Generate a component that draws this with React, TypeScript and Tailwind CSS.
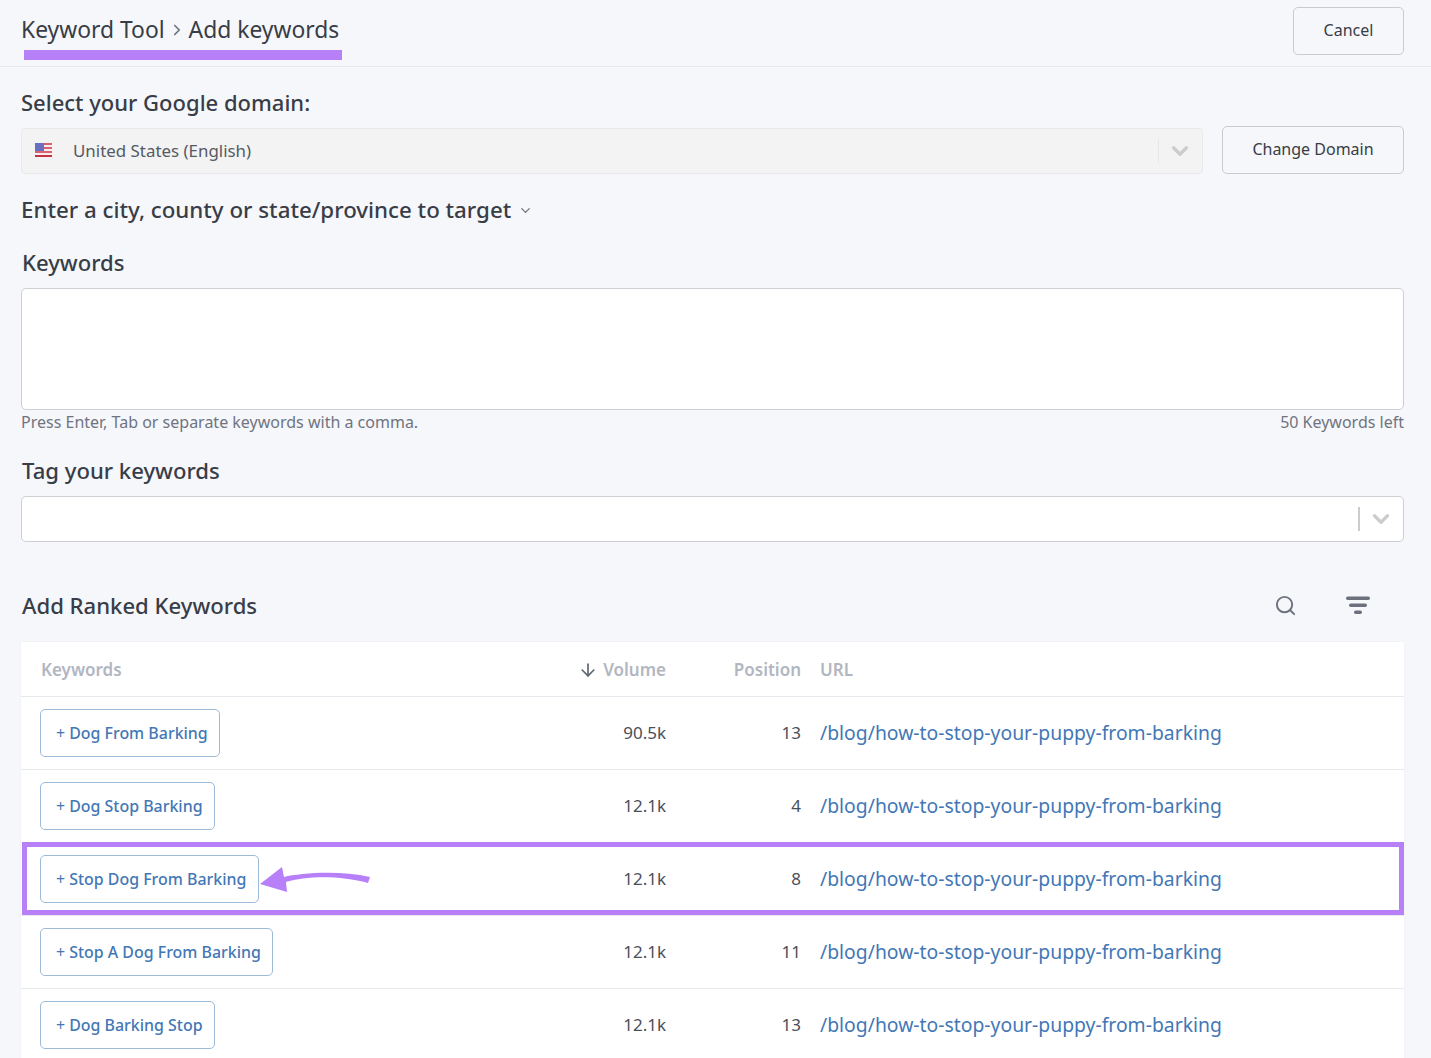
import { ArrowDown, ChevronDown, ChevronRight, Search } from 'lucide-react';

const rows = [
  { keyword: 'Dog From Barking', volume: '90.5k', position: 13 },
  { keyword: 'Dog Stop Barking', volume: '12.1k', position: 4 },
  { keyword: 'Stop Dog From Barking', volume: '12.1k', position: 8, highlight: true },
  { keyword: 'Stop A Dog From Barking', volume: '12.1k', position: 11 },
  { keyword: 'Dog Barking Stop', volume: '12.1k', position: 13 },
];

const UsFlag = () => (
  <svg width="17" height="14" viewBox="0 0 17 14" className="shrink-0">
    <rect x="0" y="0" width="17" height="14" fill="#f4eef2" />
    <rect x="0" y="0" width="17" height="2" fill="#d9646e" />
    <rect x="0" y="4" width="17" height="2" fill="#d9646e" />
    <rect x="0" y="8" width="17" height="2" fill="#d9646e" />
    <rect x="0" y="12" width="17" height="2" fill="#c8323f" />
    <rect x="0" y="0" width="9" height="8" fill="#6a6fc4" />
  </svg>
);

const SelectArrow = ({ muted }: { muted?: boolean }) => (
  <div className="flex items-center">
    <div className={muted ? 'h-[24px] w-px bg-[#e6e6e6]' : 'h-[24px] w-[2px] bg-[#cccccc]'} />
    <ChevronDown className="ml-[8px] mr-[9px] h-[26px] w-[26px] text-[#cccccc]" strokeWidth={3} />
  </div>
);

const App = () => {
  return (
    <div className="h-[1058px] overflow-hidden bg-[#f6f7fb] font-['Noto_Sans',sans-serif] text-[#383d47]">
      <div className="relative flex h-[67px] items-start justify-between border-b border-[#e8e9ee] pl-[21px] pr-[27px]">
        <div className="flex h-[60px] items-center text-[22.85px] leading-none">
          <span>Keyword Tool</span>
          <ChevronRight className="mx-[3px] h-[18px] w-[18px] text-[#6c717d]" strokeWidth={2.25} />
          <span>Add keywords</span>
        </div>
        <div className="absolute left-[24px] top-[50px] h-[10px] w-[318px] bg-[#b780f9]" />
        <button className="mt-[7px] h-[48px] w-[111px] rounded-[5px] border border-[#c9cbd1] pb-[2px] text-[16px]">Cancel</button>
      </div>

      <div className="pl-[21px] pr-[27px]">
        <h3 className="mt-[20px] text-[22px] font-medium leading-[30px]">Select your Google domain:</h3>
        <div className="mt-[10px] flex items-center gap-[19px]">
          <div className="flex h-[46px] flex-1 items-center justify-between rounded-[4px] border border-[#e9e9ea] bg-[#f3f3f3] pl-[13px]">
            <div className="flex items-center gap-[21px] text-[16.9px] text-[#555a64]">
              <UsFlag />
              <span>United States (English)</span>
            </div>
            <SelectArrow muted />
          </div>
          <button className="-mt-[1px] h-[48px] w-[182px] rounded-[5px] border border-[#c9cbd1] pb-[2px] text-[16px]">Change Domain</button>
        </div>

        <div className="mt-[21px] flex items-center text-[22.3px] font-medium leading-[30px]">
          <span>Enter a city, county or state/province to target</span>
          <ChevronDown className="ml-[7px] h-[15px] w-[15px] text-[#6c717d]" strokeWidth={2} />
        </div>

        <h3 className="mt-[22px] pl-[1px] text-[22.1px] font-medium leading-[30px]">Keywords</h3>
        <div className="mt-[11px] h-[122px] rounded-[5px] border border-[#cdcfd4] bg-white" />
        <div className="mt-[1px] flex justify-between text-[16px] leading-[22px] text-[#6f7480]">
          <span>Press Enter, Tab or separate keywords with a comma.</span>
          <span>50 Keywords left</span>
        </div>

        <h3 className="mt-[22px] pl-[1px] text-[22.1px] font-medium leading-[30px]">Tag your keywords</h3>
        <div className="mt-[11px] flex h-[46px] items-center justify-end rounded-[5px] border border-[#cdcfd4] bg-white">
          <SelectArrow />
        </div>

        <div className="mt-[45px] flex h-[36px] items-center justify-between">
          <h3 className="pl-[1px] text-[22.1px] font-medium leading-[30px]">Add Ranked Keywords</h3>
          <div className="flex items-center">
            <Search className="h-[23px] w-[23px] text-[#6c717d]" strokeWidth={2} />
            <svg width="26" height="20" viewBox="0 0 26 20" className="ml-[48px] mr-[33px] text-[#6c717d]">
              <rect x="1" y="1.5" width="24" height="3.5" rx="1.75" fill="currentColor" />
              <rect x="4" y="8.5" width="18" height="3.5" rx="1.75" fill="currentColor" />
              <rect x="9" y="15.5" width="8" height="3.5" rx="1.75" fill="currentColor" />
            </svg>
          </div>
        </div>

        <div className="mt-[19px] bg-white shadow-[0_0_2px_rgba(0,0,0,0.05)]">
          <div className="flex h-[55px] items-center border-b border-[#e8e9ee] pl-[20px] pt-[2px] text-[17px] font-semibold text-[#b2b6c1]">
            <div className="w-[520px]">Keywords</div>
            <div className="flex w-[105px] items-center justify-end">
              <ArrowDown className="mr-[5px] h-[20px] w-[20px] text-[#5f6470]" strokeWidth={2} />
              <span>Volume</span>
            </div>
            <div className="w-[135px] text-right">Position</div>
            <div className="ml-[19px]">URL</div>
          </div>
          {rows.map((row) => (
            <div key={row.keyword} className="relative flex h-[73px] items-center border-b border-[#e8e9ee] pl-[19px] text-[17px]">
              <div className="w-[521px]">
                <button className="inline-flex h-[48px] items-center rounded-[5px] border border-[#9dbad6] pl-[15px] pr-[11.5px] pt-[2px] text-[15.95px] font-medium text-[#4377b5]">
                  <span className="mr-[4px] font-normal">+</span>
                  {row.keyword}
                </button>
              </div>
              <div className="w-[105px] text-right text-[#4a4f59]">{row.volume}</div>
              <div className="w-[135px] text-right text-[#4a4f59]">{row.position}</div>
              <a className="ml-[19px] text-[19.35px] text-[#4377b5]">/blog/how-to-stop-your-puppy-from-barking</a>
              {row.highlight && (
                <>
                  <div className="absolute -top-[1px] left-[1px] right-0 h-[73px] border-[5px] border-[#b780f9]" />
                  <svg width="112" height="28" viewBox="0 0 112 28" className="absolute left-[239px] top-[23px]">
                    <path d="M0 18 L22 1 L24 11 C40 7 80 4 110 11 L108 17 C80 9 45 10 26 16 L27 26 Z" fill="#b780f9" />
                  </svg>
                </>
              )}
            </div>
          ))}
        </div>
      </div>
    </div>
  );
};

export default App;
